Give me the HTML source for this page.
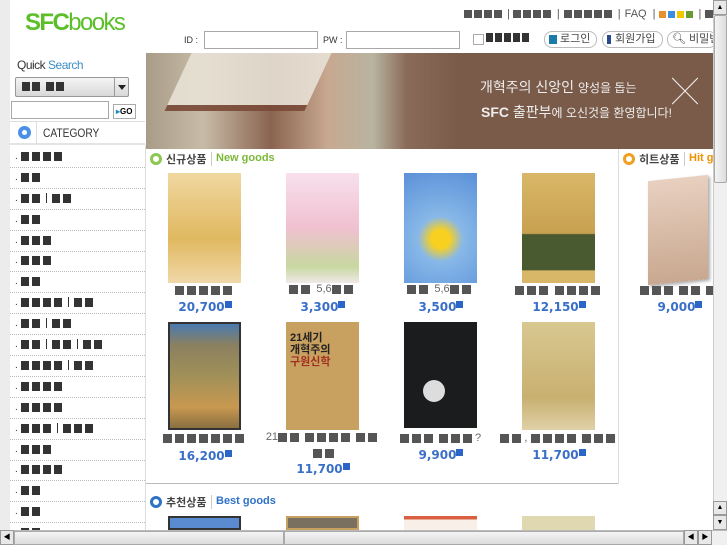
<!DOCTYPE html>
<html><head><meta charset="utf-8">
<style>
*{margin:0;padding:0;box-sizing:border-box}
body{width:727px;height:545px;overflow:hidden;position:relative;background:#fff;font-family:"Liberation Sans","Noto Sans CJK KR",sans-serif}
.a{position:absolute}
.q{display:inline-block;width:8px;height:8px;background:#555;margin-right:2px;vertical-align:middle}
.d{background:#333}
.k{display:inline-block;width:8px;height:9px;background:#333;margin-right:3px;vertical-align:middle}
.bar{display:inline-block;width:1px;height:10px;background:#333;margin:0 5px 0 3px;vertical-align:middle}
.cat{position:absolute;left:10px;width:135px;height:21px;border-bottom:1px dotted #bbb;font-size:10px;line-height:20px;padding-left:5px;color:#333}
.cat i{font-style:normal;margin-right:3px}
.inp{position:absolute;height:18px;border:1px solid #a8a8a8;background:#fff}
.btn{position:absolute;top:31px;height:17px;border:1px solid #bbb;border-radius:8px;font-size:11px;line-height:15px;color:#444;padding-left:4px;background:#fff;white-space:nowrap;overflow:hidden}
.cov{position:absolute;width:73px}
.ttl{position:absolute;text-align:center;font-size:11px;color:#666;white-space:nowrap}
.ttl .q{width:9px;height:9px;margin-right:3px}
.pr{position:absolute;text-align:center;font-size:12px;font-weight:bold;color:#3a6fc8;font-family:"DejaVu Sans",sans-serif;letter-spacing:0}
.pr b{display:inline-block;width:7px;height:7px;background:#2b65c8;vertical-align:top;margin-top:1px}
</style></head><body>
<div class="a" style="left:0;top:0;width:10px;height:545px;background:#ececec"></div>
<div class="a" style="left:25px;top:9px;font-size:24px;color:#5cbf2a;letter-spacing:-1.6px"><b>SFC</b>books</div>
<div class="a" style="left:464px;top:8px;font-size:11px;color:#555;line-height:12px;white-space:nowrap">
<span class="q"></span><span class="q"></span><span class="q"></span><span class="q"></span><span style="margin:0 3px">|</span><span class="q"></span><span class="q"></span><span class="q"></span><span class="q"></span><span style="margin:0 4px">|</span><span class="q"></span><span class="q"></span><span class="q"></span><span class="q"></span><span class="q"></span><span style="margin:0 4px">|</span>FAQ <span style="margin:0 3px">|</span><span class="q" style="background:#e89030;width:7px;height:7px"></span><span class="q" style="background:#3a8ee0;width:7px;height:7px"></span><span class="q" style="background:#f0c800;width:7px;height:7px"></span><span class="q" style="background:#6a9a30;width:7px;height:7px"></span><span style="margin:0 4px">|</span><span class="q"></span></div>
<div class="a" style="left:184px;top:35px;font-size:9px;color:#333">ID :</div>
<div class="inp" style="left:204px;top:31px;width:114px"></div>
<div class="a" style="left:323px;top:35px;font-size:9px;color:#333">PW :</div>
<div class="inp" style="left:346px;top:31px;width:114px"></div>
<div class="a" style="left:473px;top:34px;width:11px;height:11px;border:1px solid #aaa"></div>
<div class="a" style="left:486px;top:33px;line-height:9px"><span class="k d" style="width:7px;margin-right:2px"></span><span class="k" style="width:7px;margin-right:2px"></span><span class="k" style="width:7px;margin-right:2px"></span><span class="k" style="width:7px;margin-right:2px"></span><span class="k" style="width:7px;margin-right:2px"></span></div>
<div class="btn" style="left:544px;width:53px"><span style="display:inline-block;width:8px;height:9px;background:#1a7aa8;vertical-align:middle;margin-right:3px"></span>로그인</div>
<div class="btn" style="left:602px;width:61px"><span style="display:inline-block;width:4px;height:9px;background:#2a4a90;vertical-align:middle;margin-right:4px"></span>회원가입</div>
<div class="btn" style="left:667px;width:50px">🔍︎ 비밀번</div>
<div class="a" style="left:17px;top:58px;font-size:12px;color:#333;letter-spacing:-0.5px">Quick <span style="color:#3a8ec8">Search</span></div>
<div class="a" style="left:15px;top:77px;width:114px;height:20px;border:1px solid #999;border-radius:2px;background:linear-gradient(#f4f4f4,#d8d8d8)">
<div class="a" style="left:6px;top:4px;line-height:9px"><span class="k" style="margin-right:2px"></span><span class="k" style="margin-right:6px"></span><span class="k" style="margin-right:2px"></span><span class="k"></span></div>
<div class="a" style="left:98px;top:0;width:1px;height:18px;background:#999"></div>
<div class="a" style="left:102px;top:7px;border:4px solid transparent;border-top:5px solid #222"></div></div>
<div class="inp" style="left:11px;top:101px;width:98px"></div>
<div class="a" style="left:113px;top:104px;width:23px;height:15px;border:1px solid #aaa;font-size:8px;font-weight:bold;line-height:13px;padding-left:2px"><span style="color:#1a8ac8">▸</span>GO</div>
<div class="a" style="left:10px;top:121px;width:135px;height:24px;border-top:1px solid #ddd;border-bottom:2px solid #e4e4e4"></div>
<div class="a" style="left:18px;top:126px;width:13px;height:13px;border-radius:50%;background:#4a90e8"><div style="margin:4px;width:5px;height:5px;border-radius:50%;background:#fff"></div></div>
<div class="a" style="left:36px;top:122px;width:1px;height:22px;background:#ddd"></div>
<div class="a" style="left:43px;top:126px;font-size:12px;color:#333;transform:scaleX(.85);transform-origin:left">CATEGORY</div>
<div class="a" style="left:145px;top:145px;width:1px;height:385px;background:#ddd"></div>

<div class="cat" style="top:147px"><i>.</i><span class="k"></span><span class="k"></span><span class="k"></span><span class="k"></span></div>
<div class="cat" style="top:168px"><i>.</i><span class="k"></span><span class="k"></span></div>
<div class="cat" style="top:189px"><i>.</i><span class="k"></span><span class="k"></span><span class="bar"></span><span class="k"></span><span class="k"></span></div>
<div class="cat" style="top:210px"><i>.</i><span class="k"></span><span class="k"></span></div>
<div class="cat" style="top:231px"><i>.</i><span class="k"></span><span class="k"></span><span class="k"></span></div>
<div class="cat" style="top:251px"><i>.</i><span class="k"></span><span class="k"></span><span class="k"></span></div>
<div class="cat" style="top:272px"><i>.</i><span class="k"></span><span class="k"></span></div>
<div class="cat" style="top:293px"><i>.</i><span class="k"></span><span class="k"></span><span class="k"></span><span class="k"></span><span class="bar"></span><span class="k"></span><span class="k"></span></div>
<div class="cat" style="top:314px"><i>.</i><span class="k"></span><span class="k"></span><span class="bar"></span><span class="k"></span><span class="k"></span></div>
<div class="cat" style="top:335px"><i>.</i><span class="k"></span><span class="k"></span><span class="bar"></span><span class="k"></span><span class="k"></span><span class="bar"></span><span class="k"></span><span class="k"></span></div>
<div class="cat" style="top:356px"><i>.</i><span class="k"></span><span class="k"></span><span class="k"></span><span class="k"></span><span class="bar"></span><span class="k"></span><span class="k"></span></div>
<div class="cat" style="top:377px"><i>.</i><span class="k"></span><span class="k"></span><span class="k"></span><span class="k"></span></div>
<div class="cat" style="top:398px"><i>.</i><span class="k"></span><span class="k"></span><span class="k"></span><span class="k"></span></div>
<div class="cat" style="top:419px"><i>.</i><span class="k"></span><span class="k"></span><span class="k"></span><span class="bar"></span><span class="k"></span><span class="k"></span><span class="k"></span></div>
<div class="cat" style="top:440px"><i>.</i><span class="k"></span><span class="k"></span><span class="k"></span></div>
<div class="cat" style="top:460px"><i>.</i><span class="k"></span><span class="k"></span><span class="k"></span><span class="k"></span></div>
<div class="cat" style="top:481px"><i>.</i><span class="k"></span><span class="k"></span></div>
<div class="cat" style="top:502px"><i>.</i><span class="k"></span><span class="k"></span></div>
<div class="cat" style="top:523px"><i>.</i><span class="k"></span><span class="k"></span></div>

<div class="a" style="left:146px;top:53px;width:567px;height:96px;background:linear-gradient(90deg,#a89c88 0%,#c8bca8 10%,#8a6450 22%,#c8a890 32%,#b8b4a0 40%,#8a6a58 46%,#7a5a48 55%,#7a5a48 100%)"></div>
<div class="a" style="left:178px;top:53px;width:140px;height:58px;background:#e8e2d6;transform:skewX(-25deg);opacity:.9;border-bottom:6px solid #7a4a38"></div>
<div class="a" style="left:480px;top:77px;font-size:14px;color:#eee;white-space:nowrap">개혁주의 신앙인 <span style="font-size:12px">양성을 돕는</span></div>
<div class="a" style="left:481px;top:102px;font-size:14px;color:#eee;white-space:nowrap"><b>SFC</b> 출판부<span style="font-size:12px">에 오신것을 환영합니다!</span></div>
<div class="a" style="left:672px;top:72px;font-size:26px;color:#eee;font-weight:100">╳</div>

<div class="a" style="left:150px;top:153px;width:12px;height:12px;border-radius:50%;border:3px solid #8cc850"></div>
<div class="a" style="left:166px;top:151px;font-size:11px;color:#444;font-weight:bold">신규상품</div>
<div class="a" style="left:211px;top:152px;width:1px;height:14px;background:#ccc"></div>
<div class="a" style="left:216px;top:152px;font-size:11px;color:#7ab838;font-weight:bold">New goods</div>
<div class="a" style="left:618px;top:149px;width:1px;height:335px;background:#ddd"></div>
<div class="a" style="left:623px;top:153px;width:12px;height:12px;border-radius:50%;border:3px solid #f0a020"></div>
<div class="a" style="left:639px;top:151px;font-size:11px;color:#444;font-weight:bold">히트상품</div>
<div class="a" style="left:684px;top:152px;width:1px;height:14px;background:#ccc"></div>
<div class="a" style="left:689px;top:152px;font-size:11px;color:#f09000;font-weight:bold">Hit g</div>

<div class="cov" style="left:168px;top:173px;height:110px;background:linear-gradient(#f0d8a0,#e0b860 60%,#f0d8a8)"></div>
<div class="cov" style="left:286px;top:173px;height:110px;background:linear-gradient(#f8e0ec,#f0c0d0 50%,#c8d8a0 85%,#f0e8e8)"></div>
<div class="cov" style="left:404px;top:173px;height:110px;background:radial-gradient(circle at 50% 60%,#f8d020 12%,#88b8e8 30%,#5a90d8)"></div>
<div class="cov" style="left:522px;top:173px;height:110px;background:linear-gradient(#d8b868 0,#c8a050 55%,#4a5a30 56%,#4a5a30 88%,#d8b868 89%)"></div>
<div class="a" style="left:648px;top:178px;width:60px;height:104px;background:linear-gradient(#e8d0c0,#c8a890);transform:skewY(-6deg);box-shadow:2px 2px 3px #aaa"></div>

<div class="ttl" style="left:160px;top:284px;width:89px"><span class="q"></span><span class="q"></span><span class="q"></span><span class="q"></span><span class="q"></span></div>
<div class="ttl" style="left:278px;top:283px;width:89px"><span class="q"></span><span class="q"></span> 5,6<span class="q"></span><span class="q"></span></div>
<div class="ttl" style="left:396px;top:283px;width:89px"><span class="q"></span><span class="q"></span> 5,6<span class="q"></span><span class="q"></span></div>
<div class="ttl" style="left:503px;top:284px;width:112px"><span class="q"></span><span class="q"></span><span class="q"></span> <span class="q"></span><span class="q"></span><span class="q"></span><span class="q"></span></div>
<div class="ttl" style="left:640px;top:284px;width:80px;text-align:left"><span class="q"></span><span class="q"></span><span class="q"></span> <span class="q"></span><span class="q"></span> <span class="q"></span></div>

<div class="pr" style="left:165px;top:300px;width:80px">20,700<b></b></div>
<div class="pr" style="left:283px;top:300px;width:80px">3,300<b></b></div>
<div class="pr" style="left:401px;top:300px;width:80px">3,500<b></b></div>
<div class="pr" style="left:519px;top:300px;width:80px">12,150<b></b></div>
<div class="pr" style="left:650px;top:300px;width:60px">9,000<b></b></div>

<div class="cov" style="left:168px;top:322px;height:108px;border:2px solid #333;background:linear-gradient(#4a7ab0 0,#8a8060 20%,#a09058 50%,#c89850 80%,#8a7040)"></div>
<div class="cov" style="left:286px;top:322px;height:108px;background:#c8a060"></div>
<div class="a" style="left:290px;top:332px;font-size:11px;font-weight:bold;color:#222;line-height:12px">21세기<br>개혁주의<br><span style="color:#a03020">구원신학</span></div>
<div class="cov" style="left:404px;top:322px;height:106px;background:#1a1c1e"></div>
<div class="a" style="left:423px;top:380px;width:22px;height:22px;border-radius:50%;background:#ddd"></div>
<div class="cov" style="left:522px;top:322px;height:108px;background:linear-gradient(#d8c890,#c8b070 70%,#e0d0a8)"></div>

<div class="ttl" style="left:155px;top:432px;width:100px"><span class="q"></span><span class="q"></span><span class="q"></span><span class="q"></span><span class="q"></span><span class="q"></span><span class="q"></span></div>
<div class="ttl" style="left:262px;top:431px;width:122px">21<span class="q"></span><span class="q"></span> <span class="q"></span><span class="q"></span><span class="q"></span><span class="q"></span> <span class="q"></span><span class="q"></span></div>
<div class="ttl" style="left:300px;top:447px;width:50px"><span class="q"></span><span class="q"></span></div>
<div class="ttl" style="left:393px;top:432px;width:95px"><span class="q"></span><span class="q"></span><span class="q"></span> <span class="q"></span><span class="q"></span><span class="q"></span>?</div>
<div class="ttl" style="left:498px;top:432px;width:122px"><span class="q"></span><span class="q"></span>, <span class="q"></span><span class="q"></span><span class="q"></span><span class="q"></span> <span class="q"></span><span class="q"></span><span class="q"></span></div>

<div class="pr" style="left:165px;top:449px;width:80px">16,200<b></b></div>
<div class="pr" style="left:283px;top:462px;width:80px">11,700<b></b></div>
<div class="pr" style="left:401px;top:448px;width:80px">9,900<b></b></div>
<div class="pr" style="left:519px;top:448px;width:80px">11,700<b></b></div>

<div class="a" style="left:146px;top:483px;width:472px;height:1px;background:#bbb"></div>
<div class="a" style="left:150px;top:496px;width:12px;height:12px;border-radius:50%;border:3px solid #2e72c8"></div>
<div class="a" style="left:166px;top:494px;font-size:11px;color:#444;font-weight:bold">추천상품</div>
<div class="a" style="left:211px;top:495px;width:1px;height:14px;background:#ccc"></div>
<div class="a" style="left:216px;top:495px;font-size:11px;color:#2e72c8;font-weight:bold">Best goods</div>
<div class="cov" style="left:168px;top:516px;height:14px;border:2px solid #333;background:#5a8ad0"></div>
<div class="cov" style="left:286px;top:516px;height:14px;background:#7a7060;border:2px solid #c8a060"></div>
<div class="cov" style="left:404px;top:516px;height:14px;background:linear-gradient(#d86040 0,#d86040 25%,#f8f0e8 26%)"></div>
<div class="cov" style="left:522px;top:516px;height:14px;background:#e0d8b0"></div>

<div class="a" style="left:713px;top:0;width:14px;height:530px;background:#f0f0f0;border-left:1px solid #ccc"></div>
<div class="a" style="left:713px;top:0;width:14px;height:15px;background:#e8e8e8;border:1px solid #999;font-size:7px;text-align:center;line-height:13px">▲</div>
<div class="a" style="left:714px;top:15px;width:13px;height:168px;background:linear-gradient(90deg,#f4f4f4,#dcdcdc);border:1px solid #aaa;border-radius:2px"></div>
<div class="a" style="left:713px;top:501px;width:14px;height:14px;background:#e8e8e8;border:1px solid #999;font-size:7px;text-align:center;line-height:12px">▲</div>
<div class="a" style="left:713px;top:515px;width:14px;height:15px;background:#e8e8e8;border:1px solid #999;font-size:7px;text-align:center;line-height:13px">▼</div>
<div class="a" style="left:0;top:530px;width:727px;height:15px;background:#f0f0f0;border-top:1px solid #bbb"></div>
<div class="a" style="left:0;top:530px;width:14px;height:15px;background:#e8e8e8;border:1px solid #999;font-size:7px;text-align:center;line-height:13px">◀</div>
<div class="a" style="left:14px;top:531px;width:270px;height:14px;background:linear-gradient(#f4f4f4,#dcdcdc);border:1px solid #aaa"></div>
<div class="a" style="left:284px;top:531px;width:400px;height:14px;background:linear-gradient(#f4f4f4,#dcdcdc);border:1px solid #aaa"></div>
<div class="a" style="left:684px;top:530px;width:14px;height:15px;background:#e8e8e8;border:1px solid #999;font-size:7px;text-align:center;line-height:13px">◀</div>
<div class="a" style="left:698px;top:530px;width:14px;height:15px;background:#e8e8e8;border:1px solid #999;font-size:7px;text-align:center;line-height:13px">▶</div>
</body></html>
